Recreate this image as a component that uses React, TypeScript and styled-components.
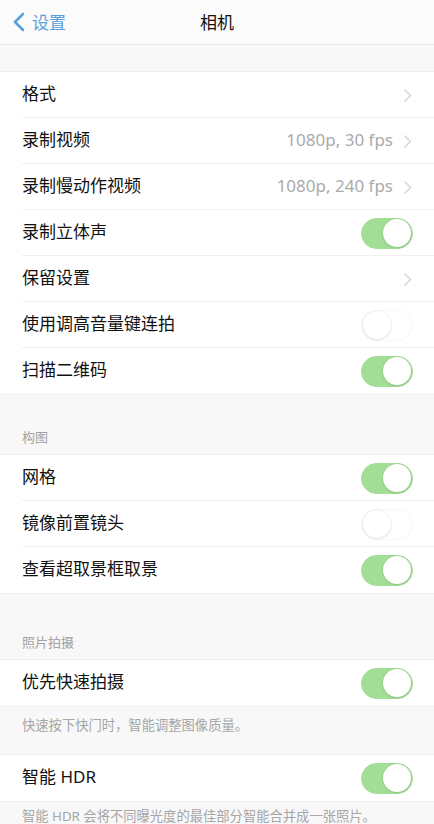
import React from 'react';
import styled, { createGlobalStyle } from 'styled-components';

const GlobalStyle = createGlobalStyle`
  html, body {
    margin: 0;
    padding: 0;
    background: #f8f8f8;
  }
  body {
    font-family: "Noto Sans", "Noto Sans CJK SC", sans-serif;
    -webkit-font-smoothing: antialiased;
  }
`;

const Page = styled.div`
  width: 434px;
  min-height: 824px;
  background: #f8f8f8;
  overflow: hidden;
`;

const NavBar = styled.div`
  height: 45px;
  display: grid;
  grid-template-columns: 1fr auto 1fr;
  align-items: center;
  background: #fbfbfb;
  border-bottom: 1px solid #e6e6e6;
  box-sizing: border-box;
`;

const BackButton = styled.div`
  display: flex;
  align-items: center;
  gap: 7px;
  padding-left: 13px;
  color: #5aa0dc;
  font-size: 17px;
  line-height: 1;
`;

const NavTitle = styled.div`
  font-size: 17px;
  color: #111;
  line-height: 1;
`;

const Spacer = styled.div<{ h: number }>`
  height: ${p => p.h}px;
`;

const Group = styled.div`
  background: #fff;
  border-top: 1px solid #efefef;
  border-bottom: 1px solid #efefef;
`;

const Row = styled.div`
  height: 46px;
  display: flex;
  align-items: center;
  padding: 0 21px 0 22px;
  position: relative;
  &:not(:last-child)::after {
    content: '';
    position: absolute;
    left: 22px;
    right: 0;
    bottom: 0;
    height: 1px;
    background: #f0f0f0;
  }
`;

const Label = styled.div`
  flex: 1;
  font-size: 17px;
  line-height: 24px;
  margin-top: -3px;
  color: #111;
  white-space: nowrap;
`;

const Value = styled.div`
  font-size: 17px;
  line-height: 24px;
  margin-top: -3px;
  color: #aaaaaa;
  margin-right: 11px;
  white-space: nowrap;
`;

const Chevron = styled.svg`
  width: 8px;
  height: 13px;
  margin-right: 1px;
`;

const Track = styled.div<{ on: boolean }>`
  width: 52px;
  height: 31px;
  border-radius: 16px;
  box-sizing: border-box;
  background: ${p => (p.on ? '#a2de95' : '#fff')};
  border: 1px solid ${p => (p.on ? '#a2de95' : '#f7f7f7')};
  display: flex;
  align-items: center;
  justify-content: ${p => (p.on ? 'flex-end' : 'flex-start')};
  padding: 0 1px;
`;

const Knob = styled.div`
  width: 28px;
  height: 28px;
  border-radius: 50%;
  background: #fff;
  box-shadow: 0 1px 3px rgba(0, 0, 0, 0.1), 0 0 0 0.5px rgba(0, 0, 0, 0.06);
`;

const SectionHeader = styled.div<{ h: number }>`
  height: ${p => p.h}px;
  display: flex;
  align-items: flex-end;
  padding: 0 22px 8px;
  box-sizing: border-box;
  font-size: 13px;
  color: #a2a2a2;
`;

const Footer = styled.div<{ h: number; top: number }>`
  height: ${p => p.h}px;
  padding: ${p => p.top}px 22px 0;
  box-sizing: border-box;
  font-size: 13.3px;
  line-height: 18px;
  color: #a6a6a6;
  white-space: nowrap;
`;

const Toggle: React.FC<{ on: boolean }> = ({ on }) => (
  <Track on={on}>
    <Knob />
  </Track>
);

const Disclosure: React.FC = () => (
  <Chevron viewBox="0 0 8 13">
    <path d="M1 1l5.5 5.5L1 12" fill="none" stroke="#d6d6d6" strokeWidth="1.5" strokeLinecap="round" strokeLinejoin="round" />
  </Chevron>
);

type Item = { label: string; value?: string; link?: boolean; toggle?: boolean; on?: boolean };

const group1: Item[] = [
  { label: '格式', link: true },
  { label: '录制视频', value: '1080p, 30 fps', link: true },
  { label: '录制慢动作视频', value: '1080p, 240 fps', link: true },
  { label: '录制立体声', toggle: true, on: true },
  { label: '保留设置', link: true },
  { label: '使用调高音量键连拍', toggle: true, on: false },
  { label: '扫描二维码', toggle: true, on: true },
];

const group2: Item[] = [
  { label: '网格', toggle: true, on: true },
  { label: '镜像前置镜头', toggle: true, on: false },
  { label: '查看超取景框取景', toggle: true, on: true },
];

const SettingRow: React.FC<{ item: Item }> = ({ item }) => (
  <Row>
    <Label>{item.label}</Label>
    {item.value && <Value>{item.value}</Value>}
    {item.link && <Disclosure />}
    {item.toggle && <Toggle on={!!item.on} />}
  </Row>
);

export default function App() {
  return (
    <Page>
      <GlobalStyle />
      <NavBar>
        <BackButton>
          <svg width="12" height="20" viewBox="0 0 12 20">
            <path d="M10 2L2 10l8 8" fill="none" stroke="#5aa0dc" strokeWidth="2.6" strokeLinecap="round" strokeLinejoin="round" />
          </svg>
          设置
        </BackButton>
        <NavTitle>相机</NavTitle>
        <div />
      </NavBar>

      <Spacer h={26} />
      <Group>
        {group1.map(i => (
          <SettingRow key={i.label} item={i} />
        ))}
      </Group>

      <SectionHeader h={59}>构图</SectionHeader>
      <Group>
        {group2.map(i => (
          <SettingRow key={i.label} item={i} />
        ))}
      </Group>

      <SectionHeader h={65}>照片拍摄</SectionHeader>
      <Group>
        <SettingRow item={{ label: '优先快速拍摄', toggle: true, on: true }} />
      </Group>
      <Footer h={47} top={9}>快速按下快门时，智能调整图像质量。</Footer>
      <Group>
        <SettingRow item={{ label: '智能 HDR', toggle: true, on: true }} />
      </Group>
      <Footer h={30} top={5}>智能 HDR 会将不同曝光度的最佳部分智能合并成一张照片。</Footer>
    </Page>
  );
}
